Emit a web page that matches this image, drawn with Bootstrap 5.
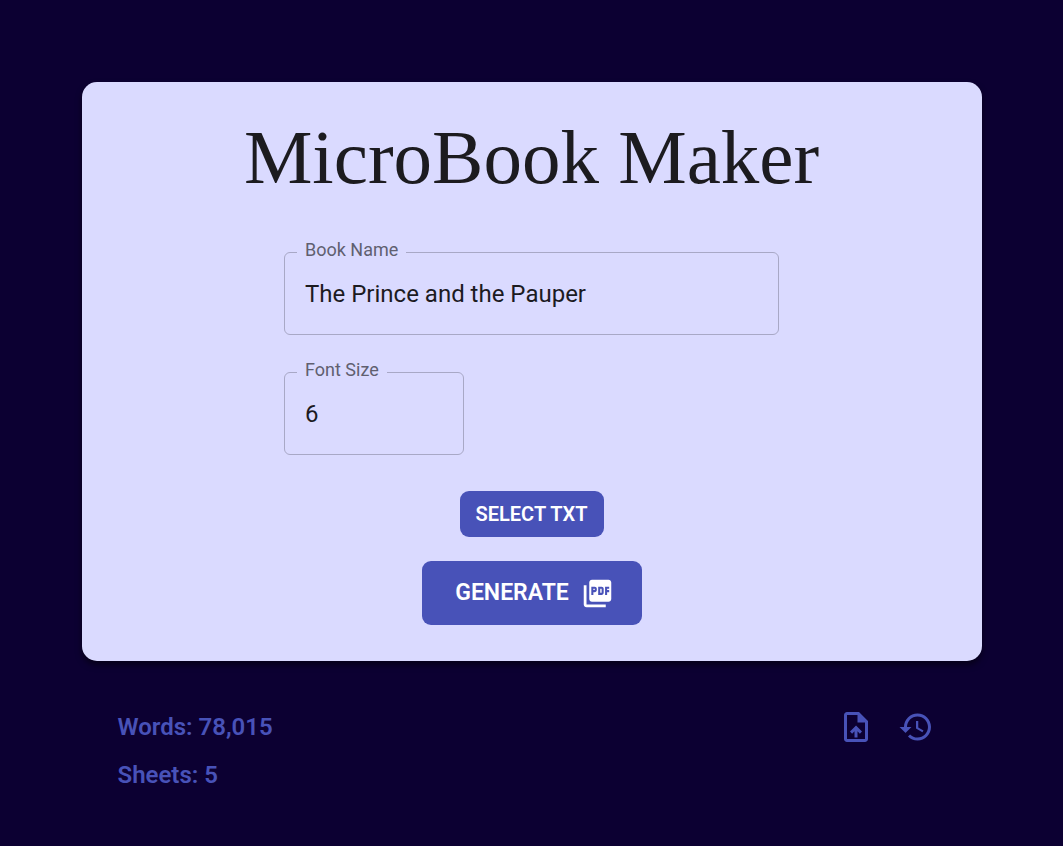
<!DOCTYPE html>
<html lang="en">
<head>
<meta charset="utf-8">
<meta name="viewport" content="width=device-width, initial-scale=1">
<title>MicroBook Maker</title>
<link href="https://cdn.jsdelivr.net/npm/bootstrap@5.3.0/dist/css/bootstrap.min.css" rel="stylesheet">
<style>
  :root { --ink: #1c1b1f; --paper: #dadaff; --brand: #4852b8; --night: #0c0032; }
  body { background: var(--night); color: var(--ink); font-family: Roboto, "Liberation Sans", sans-serif; font-size: 24px; padding-top: 82px; }
  .maker { max-width: 900px; }
  .panel { background: var(--paper); border-radius: 15px; padding: 36px; box-shadow: 0 4px 6px rgba(0, 0, 0, .5); }
  .panel h1 { font-family: "Liberation Serif", serif; font-size: 77px; font-weight: 400; line-height: 78px; margin-bottom: 56px; }
  .fields { max-width: 495px; gap: 37px; }
  .outlined label { position: absolute; top: -16px; left: 13px; padding: 0 8px; background: var(--paper); color: #605f70; font-size: 18px; line-height: 28px; }
  .outlined input { height: 83px; padding: 0 20px; background: transparent; border: 1px solid #a8a8c6; border-radius: 6px; color: var(--ink); font-size: 24px; }
  .outlined input:focus { background: transparent; border-color: var(--brand); box-shadow: none; }
  .size-field { width: 180px; }
  .btn-brand { --bs-btn-bg: var(--brand); --bs-btn-color: #fff; --bs-btn-hover-bg: #39429c; --bs-btn-hover-color: #fff; --bs-btn-active-bg: #39429c; --bs-btn-active-color: #fff; --bs-btn-border-width: 0; --bs-btn-border-radius: 9px; --bs-btn-font-weight: 600; }
  .pick { margin-top: 36px; height: 46px; width: 144px; padding: 0; font-size: 20px; }
  .make { height: 64px; width: 220px; padding: 0 0 0 6px; font-size: 23px; gap: 12px; }
  .stats { padding: 36px; color: var(--brand); font-weight: 600; line-height: 36px; }
  .tool { padding: 12px; line-height: 0; border: 0; color: var(--brand); }
  .tool:hover { color: #7680e0; }
  svg { fill: currentColor; flex: none; }
</style>
</head>
<body>
<main class="container p-0 maker">
  <section class="panel d-flex flex-column align-items-center">
    <h1 class="text-center">MicroBook Maker</h1>
    <div class="fields w-100 d-flex flex-column">
      <div class="outlined position-relative">
        <label for="book">Book Name</label>
        <input class="form-control" type="text" id="book" value="The Prince and the Pauper">
      </div>
      <div class="outlined size-field position-relative">
        <label for="size">Font Size</label>
        <input class="form-control" type="text" inputmode="numeric" id="size" value="6">
      </div>
    </div>
    <button type="button" class="btn btn-brand pick">SELECT TXT</button>
    <button type="button" class="btn btn-brand make mt-4 d-flex align-items-center justify-content-center">
      GENERATE
      <svg width="33" height="33" viewBox="0 0 24 24" aria-hidden="true"><path d="M20 2H8c-1.100 0-2 .9-2 2v12c0 1.100.9 2 2 2h12c1.100 0 2-.9 2-2V4c0-1.100-.9-2-2-2zm-8.500 7.500c0 .83-.67 1.500-1.500 1.500H9v2H7.500V7H10c.83 0 1.500.67 1.500 1.500v1zm5 2c0 .83-.67 1.500-1.500 1.500h-2.500V7H15c.83 0 1.500.67 1.500 1.500v3zm4-3H19v1h1.500V11H19v2h-1.500V7h3v1.500zM9 9.500h1v-1H9v1zM4 6H2v14c0 1.100.9 2 2 2h14v-2H4V6zm10 5.500h1v-3h-1v3z"/></svg>
    </button>
  </section>
  <footer class="stats d-flex justify-content-between align-items-start">
    <div class="d-flex flex-column pt-2 mt-1 gap-2">
      <div>Words: 78,015</div>
      <div class="mt-1">Sheets: 5</div>
    </div>
    <div class="d-flex">
      <button type="button" class="btn tool" aria-label="Upload file">
        <svg width="36" height="36" viewBox="0 0 24 24" aria-hidden="true"><path d="M14 2H6c-1.100 0-1.990.9-1.990 2L4 20c0 1.100.89 2 1.990 2H18c1.100 0 2-.9 2-2V8l-6-6zm4 18H6V4h7v5h5v11zM8 15.010l1.410 1.410L11 14.840V19h2v-4.160l1.590 1.590L16 15.010 12.010 11 8 15.010z"/></svg>
      </button>
      <button type="button" class="btn tool" aria-label="History">
        <svg width="36" height="36" viewBox="0 0 24 24" aria-hidden="true"><path d="M13 3c-4.970 0-9 4.030-9 9H1l3.890 3.890.07.14L9 12H6c0-3.870 3.130-7 7-7s7 3.130 7 7-3.130 7-7 7c-1.930 0-3.680-.79-4.940-2.060l-1.420 1.420C8.270 19.990 10.510 21 13 21c4.970 0 9-4.030 9-9s-4.030-9-9-9zm-1 5v5l4.280 2.540.72-1.210-3.500-2.080V8H12z"/></svg>
      </button>
    </div>
  </footer>
</main>
<script src="https://cdn.jsdelivr.net/npm/bootstrap@5.3.0/dist/js/bootstrap.bundle.min.js"></script>
</body>
</html>
